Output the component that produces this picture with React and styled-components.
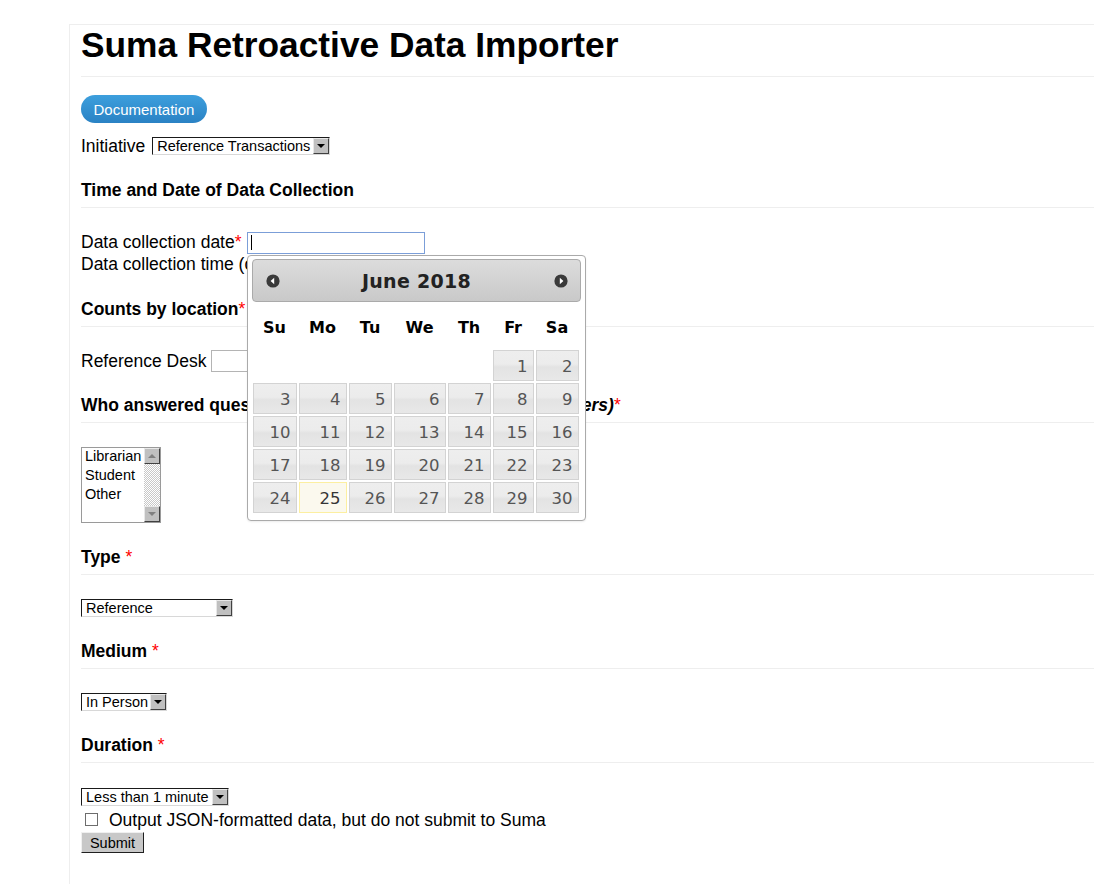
import React from "react";
import styled, { createGlobalStyle } from "styled-components";

const GlobalStyle = createGlobalStyle`
  html, body {
    margin: 0;
    padding: 0;
    background: #fff;
  }
  body {
    font-family: "Liberation Sans", Arial, sans-serif;
    font-size: 17.5px;
    color: #000;
  }
`;

const Page = styled.div`
  padding: 24px 0 0 69px;
`;

const Container = styled.main`
  border-top: 1px solid #eeeeee;
  border-left: 1px solid #eeeeee;
  padding: 0 0 30px 11px;
  min-height: 830px;
`;

const Title = styled.h1`
  margin: 0;
  font-size: 35.3px;
  line-height: 40px;
  font-weight: bold;
  padding-bottom: 11px;
  border-bottom: 1px solid #eeeeee;
`;

const ButtonRow = styled.div`
  margin-top: 18px;
  height: 28px;
`;

const DocButton = styled.a`
  display: inline-block;
  height: 28px;
  line-height: 29px;
  padding: 0 12.5px;
  border-radius: 14px;
  background: linear-gradient(#3d9fdd, #2a82c4);
  color: #fff;
  font-size: 15px;
  text-decoration: none;
`;

const Row = styled.div`
  display: flex;
  align-items: center;
  gap: ${(p) => p.$gap ?? 5}px;
  height: ${(p) => p.$h ?? 22}px;
  margin-top: ${(p) => p.$mt ?? 0}px;
  line-height: 22px;
`;

const Label = styled.span`
  white-space: nowrap;
`;

const Required = styled.span`
  color: #ff0000;
  font-weight: normal;
  font-style: normal;
`;

const SectionTitle = styled.h3`
  margin: ${(p) => p.$mt ?? 23}px 0 0;
  font-size: 17.5px;
  line-height: 22px;
  font-weight: bold;
  padding-bottom: 6px;
  border-bottom: 1px solid #eeeeee;
  white-space: nowrap;
  em {
    font-style: italic;
  }
`;

const SelectBox = styled.div`
  display: flex;
  align-items: stretch;
  box-sizing: border-box;
  width: ${(p) => p.$w}px;
  height: 18px;
  margin-top: ${(p) => p.$mt ?? 0}px;
  border: 1px solid;
  border-color: #1a1a1a #d8d8d8 #d8d8d8 #1a1a1a;
  background: #fff;
  font-size: 14.5px;
  line-height: 16px;
`;

const SelectText = styled.span`
  flex: 1;
  padding-left: 4px;
  white-space: nowrap;
  overflow: hidden;
`;

const SelectArrow = styled.span`
  width: 16px;
  display: flex;
  align-items: center;
  justify-content: center;
  box-sizing: border-box;
  background: #c0c0c0;
  border: 1px solid;
  border-color: #e8e8e8 #404040 #404040 #e8e8e8;
  &::after {
    content: "";
    border-left: 4px solid transparent;
    border-right: 4px solid transparent;
    border-top: 4px solid #000;
  }
`;

const Select = ({ w, mt, children }) => (
  <SelectBox $w={w} $mt={mt}>
    <SelectText>{children}</SelectText>
    <SelectArrow />
  </SelectBox>
);

const TextInput = styled.input`
  box-sizing: border-box;
  width: ${(p) => p.$w}px;
  height: 22px;
  margin: 0;
  padding: 1px 3px;
  border: 1px solid ${(p) => (p.$active ? "#7b9ed8" : "#b4b4b4")};
  font-family: "Liberation Sans", Arial, sans-serif;
  font-size: 14.5px;
  outline: none;
  caret-color: #000;
`;

const DateField = styled.span`
  position: relative;
  display: inline-block;
  height: 22px;
`;

const Caret = styled.span`
  position: absolute;
  left: 4px;
  top: 4px;
  width: 1px;
  height: 15px;
  background: #000;
`;

const ListBox = styled.div`
  display: flex;
  box-sizing: border-box;
  width: 80px;
  height: 76px;
  margin-top: 24px;
  border: 1px solid #9a9a9a;
  font-size: 14.5px;
`;

const ListItems = styled.div`
  flex: 1;
  padding: 0 0 0 3px;
  line-height: 19px;
  margin-top: -1px;
`;

const ScrollBar = styled.div`
  width: 16px;
  display: flex;
  flex-direction: column;
  background: repeating-conic-gradient(#c8c8c8 0 25%, #ffffff 0 50%) 0 0 / 2px 2px;
`;

const ScrollButton = styled.span`
  height: 16px;
  box-sizing: border-box;
  display: flex;
  align-items: center;
  justify-content: center;
  background: #c0c0c0;
  border: 1px solid;
  border-color: #e8e8e8 #404040 #404040 #e8e8e8;
  margin-top: ${(p) => (p.$down ? "auto" : "0")};
  &::after {
    content: "";
    border-left: 4px solid transparent;
    border-right: 4px solid transparent;
    ${(p) =>
      p.$down
        ? "border-top: 4px solid #808080;"
        : "border-bottom: 4px solid #808080;"}
  }
`;

const CheckRow = styled.label`
  display: flex;
  align-items: center;
  gap: 11px;
  height: 23px;
  line-height: 22px;
  margin-top: 2px;
  padding-left: 4px;
`;

const CheckBox = styled.input`
  appearance: none;
  width: 13px;
  height: 13px;
  margin: 0;
  box-sizing: border-box;
  border: 1px solid #6d6d6d;
  background: #fff;
`;

const SubmitButton = styled.button`
  display: block;
  margin-top: 1px;
  height: 21px;
  width: 63px;
  padding: 0;
  background: #c8c8c8;
  border: 1px solid;
  border-color: #f0f0f0 #202020 #202020 #f0f0f0;
  font-family: "Liberation Sans", Arial, sans-serif;
  font-size: 14.5px;
  line-height: 18px;
  color: #000;
`;

/* ---------- date picker ---------- */

const Picker = styled.div`
  position: absolute;
  top: calc(100% + 2px);
  left: 0;
  z-index: 10;
  width: 339px;
  box-sizing: border-box;
  padding: 3px 4px 7px;
  background: #fff;
  border: 1px solid #aaaaaa;
  border-radius: 4px;
  box-shadow: 0 1px 2px rgba(0, 0, 0, 0.08);
  font-family: "DejaVu Sans", Verdana, sans-serif;
`;

const PickerHeader = styled.div`
  display: flex;
  align-items: center;
  justify-content: space-between;
  height: 43px;
  box-sizing: border-box;
  padding: 0 12px 0 13px;
  border: 1px solid #aaaaaa;
  border-radius: 4px;
  background: linear-gradient(#dcdcdc, #c9c9c9);
  color: #222;
`;

const MonthTitle = styled.span`
  font-size: 19px;
  font-weight: bold;
  letter-spacing: 0.3px;
`;

const DayGrid = styled.div`
  display: grid;
  grid-template-columns: 44px 48px 43px 52px 43px 41px 43px;
  grid-template-rows: 44px repeat(5, 31px);
  gap: 2px;
  margin: 2px 1px 0;
`;

const DayName = styled.span`
  display: flex;
  align-items: center;
  justify-content: center;
  padding-top: 4px;
  font-size: 16px;
  font-weight: bold;
  color: #000;
`;

const DayCell = styled.span`
  box-sizing: border-box;
  display: flex;
  align-items: center;
  justify-content: flex-end;
  padding: 2px 5px 0 0;
  font-size: 16.5px;
  border: 1px solid ${(p) => (p.$today ? "#fcefa1" : "#d3d3d3")};
  color: ${(p) => (p.$today ? "#363636" : "#555555")};
  background: ${(p) =>
    p.$today
      ? "#fbf9ee"
      : "linear-gradient(#eeeeee 0, #ececec 45%, #e3e3e3 55%, #e8e8e8 100%)"};
`;

const NavIcon = ({ dir }) => (
  <svg width="14" height="14" viewBox="0 0 14 14">
    <circle cx="7" cy="7" r="6.6" fill="#3a3a3a" />
    {dir === "prev" ? (
      <polygon points="8.2,3.8 8.2,10.2 4.6,7" fill="#fff" />
    ) : (
      <polygon points="5.8,3.8 5.8,10.2 9.4,7" fill="#fff" />
    )}
  </svg>
);

const dayNames = ["Su", "Mo", "Tu", "We", "Th", "Fr", "Sa"];
const days = Array.from({ length: 30 }, (_, i) => i + 1);

const DatePicker = () => (
  <Picker>
    <PickerHeader>
      <NavIcon dir="prev" />
      <MonthTitle>June 2018</MonthTitle>
      <NavIcon dir="next" />
    </PickerHeader>
    <DayGrid>
      {dayNames.map((d) => (
        <DayName key={d}>{d}</DayName>
      ))}
      {Array.from({ length: 5 }, (_, i) => (
        <span key={"e" + i} />
      ))}
      {days.map((d) => (
        <DayCell key={d} $today={d === 25}>
          {d}
        </DayCell>
      ))}
    </DayGrid>
  </Picker>
);

const App = () => {
  return (
    <Page>
      <GlobalStyle />
      <Container>
        <Title>Suma Retroactive Data Importer</Title>
        <ButtonRow>
          <DocButton href="#">Documentation</DocButton>
        </ButtonRow>
        <Row $mt={12} $gap={7}>
          <Label>Initiative</Label>
          <Select w={178}>Reference Transactions</Select>
        </Row>

        <SectionTitle $mt={22}>Time and Date of Data Collection</SectionTitle>
        <Row $mt={23} $gap={5}>
          <Label>
            Data collection date<Required>*</Required>
          </Label>
          <DateField>
            <TextInput $w={178} $active />
            <Caret />
            <DatePicker />
          </DateField>
        </Row>
        <Row>
          <Label>Data collection time (optional)</Label>
        </Row>

        <SectionTitle>
          Counts by location<Required>*</Required>
        </SectionTitle>
        <Row $mt={23}>
          <Label>Reference Desk</Label>
          <TextInput $w={150} />
        </Row>

        <SectionTitle $mt={22}>
          Who answered questions? <em>(ctrl-click to select multiple answers)</em>
          <Required>*</Required>
        </SectionTitle>
        <ListBox>
          <ListItems>
            <div>Librarian</div>
            <div>Student</div>
            <div>Other</div>
          </ListItems>
          <ScrollBar>
            <ScrollButton />
            <ScrollButton $down />
          </ScrollBar>
        </ListBox>

        <SectionTitle>
          Type <Required>*</Required>
        </SectionTitle>
        <Select w={152} mt={24}>
          Reference
        </Select>

        <SectionTitle>
          Medium <Required>*</Required>
        </SectionTitle>
        <Select w={86} mt={24}>
          In Person
        </Select>

        <SectionTitle>
          Duration <Required>*</Required>
        </SectionTitle>
        <Select w={148} mt={25}>
          Less than 1 minute
        </Select>
        <CheckRow>
          <CheckBox type="checkbox" />
          <span>Output JSON-formatted data, but do not submit to Suma</span>
        </CheckRow>
        <SubmitButton type="button">Submit</SubmitButton>
      </Container>
    </Page>
  );
};

export default App;
